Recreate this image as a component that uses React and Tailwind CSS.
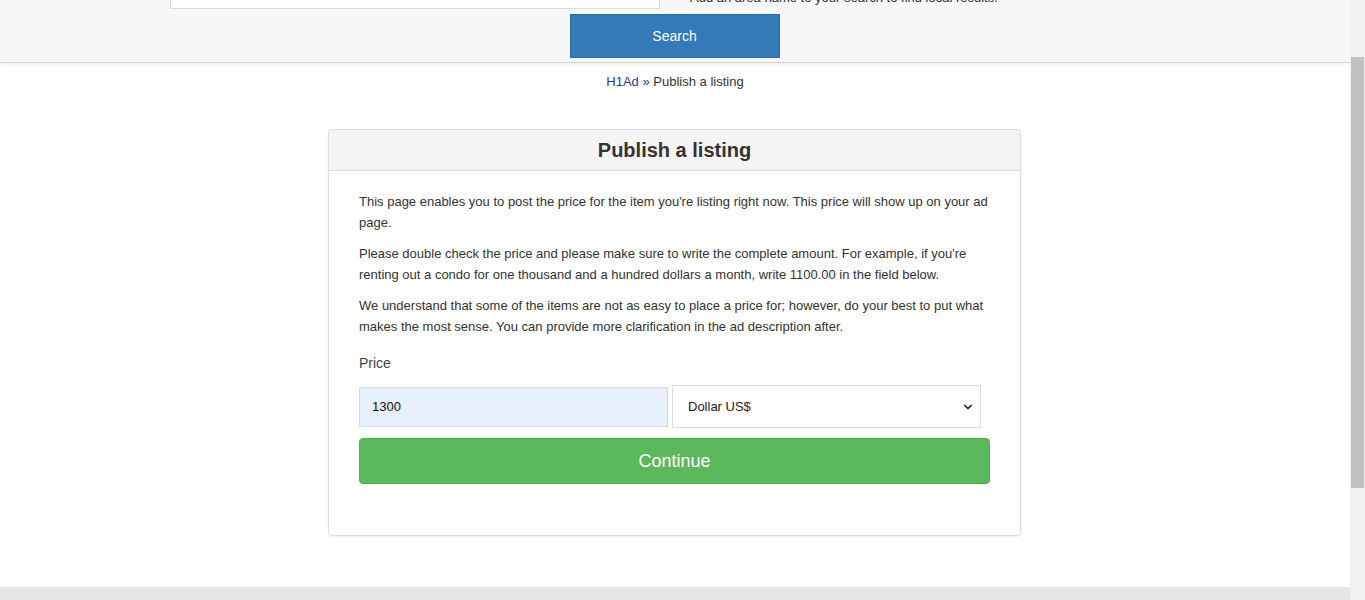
import React from "react";

export default function App() {
  return (
    <div className="flex h-[600px] w-[1365px] overflow-hidden bg-white font-['Liberation_Sans',Arial,sans-serif] text-[#333]">
      <div className="flex w-[1350px] flex-col">
        <header className="h-[63px] overflow-hidden border-b border-[#d3d3d3] bg-[#f7f7f7] shadow-[0_2px_4px_rgba(0,0,0,0.06)]">
          <div className="-mt-[26px] flex pl-[170px]">
            <div className="h-[35px] w-[490px] border border-[#dcdcdc] bg-white"></div>
            <p className="ml-[30px] pt-[14px] text-[13px] text-[#333]">Add an area name to your search to find local results.</p>
          </div>
          <div className="mt-[5px] flex justify-center pr-[1px]">
            <button className="h-[44px] w-[210px] border border-[#2e6da4] bg-[#337ab7] text-[14px] text-white">Search</button>
          </div>
        </header>
        <nav className="pt-[10px] text-center text-[13px] leading-[18px]">
          <span className="text-[#2a3a8f]">H1Ad</span> <span className="text-[#2a3a8f]">»</span> <span className="text-[#333]">Publish a listing</span>
        </nav>
        <main className="flex flex-1 justify-center pr-[1px] pt-[38px]">
          <div className="h-[407px] w-[693px] rounded-[4px] border border-[#ddd] bg-white shadow-[0_1px_2px_rgba(0,0,0,0.08)]">
            <div className="flex h-[41px] items-center justify-center rounded-t-[4px] border-b border-[#ddd] bg-[#f4f4f4]">
              <h1 className="text-[20px] font-bold text-[#333]">Publish a listing</h1>
            </div>
            <div className="px-[30px] pt-[20px]">
              <p className="mb-[10px] text-[13px] leading-[21px]">This page enables you to post the price for the item you're listing right now. This price will show up on your ad page.</p>
              <p className="mb-[10px] text-[13px] leading-[21px]">Please double check the price and please make sure to write the complete amount. For example, if you're renting out a condo for one thousand and a hundred dollars a month, write 1100.00 in the field below.</p>
              <p className="mb-[10px] text-[13px] leading-[21px]">We understand that some of the items are not as easy to place a price for; however, do your best to put what makes the most sense. You can provide more clarification in the ad description after.</p>
              <label className="block pt-[6px] text-[14px] leading-[20px] text-[#444]">Price</label>
              <div className="mt-[12px] flex items-center gap-[4px]">
                <div className="flex h-[40px] w-[309px] items-center border border-[#d6dbe3] bg-[#e8f0fe] pl-[12px] text-[13px] text-[#111]">1300</div>
                <div className="flex h-[43px] w-[309px] items-center justify-between border border-[#ddd] bg-white pl-[15px] pr-[7px] text-[13px] text-[#222]">
                  <span>Dollar US$</span>
                  <svg width="10" height="8" viewBox="0 0 10 8"><path d="M1.5 2l3.5 3.5L8.5 2" fill="none" stroke="#222" strokeWidth="1.6" /></svg>
                </div>
              </div>
              <button className="mt-[10px] h-[46px] w-[631px] rounded-[4px] border border-[#4cae4c] bg-[#5cb85c] text-[18px] text-white">Continue</button>
            </div>
          </div>
        </main>
        <footer className="h-[13px] bg-[#e6e6e6]"></footer>
      </div>
      <div className="w-[15px] bg-[#f1f1f1] pl-[1px] pr-[1px] pt-[57px]">
        <div className="h-[431px] bg-[#c1c1c1]"></div>
      </div>
    </div>
  );
}
